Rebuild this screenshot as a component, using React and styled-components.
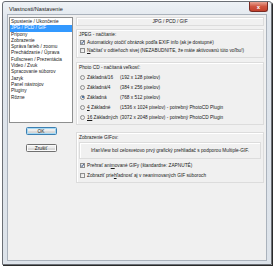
import React from "react";
import styled, { createGlobalStyle } from "styled-components";

const Global = createGlobalStyle`
  html, body { margin: 0; padding: 0; background: #fff; }
  body { font-family: "Liberation Sans", Arial, sans-serif; }
`;

const Stage = styled.div`
  width: 275px;
  height: 268px;
  padding: 1px 3px 3px 2px;
  box-sizing: border-box;
`;

const Frame = styled.div`
  height: 100%;
  box-sizing: border-box;
  border: 1px solid #6b6f75;
  border-radius: 3px 3px 0 0;
  background: linear-gradient(#eef2f6, #dfe5ec 20px, #dde3ea);
  display: flex;
  flex-direction: column;
  padding: 0 4px 3px 4px;
  box-shadow: 1px 1px 0 #2a2a2a;
`;

const TitleBar = styled.div`
  height: 12px;
  display: flex;
  align-items: center;
  justify-content: space-between;
`;

const Title = styled.span`
  font-size: 5.6px;
  color: #1a1a1a;
  padding-left: 2px;
  padding-top: 2px;
`;

const Close = styled.div`
  width: 19px;
  height: 10px;
  margin-top: -2px;
  margin-right: -1px;
  border: 1px solid #7a2a22;
  border-top: none;
  border-radius: 0 0 3px 3px;
  background: linear-gradient(#e8a595, #d0553f 50%, #c2402c);
  display: flex;
  align-items: center;
  justify-content: center;
  color: #fff;
  font-size: 6px;
  font-weight: bold;
  box-sizing: border-box;
`;

const Client = styled.div`
  flex: 1;
  background: #f0f0f0;
  border: 1px solid #aab2bc;
  display: flex;
  gap: 3px;
  padding: 2px 1px 0 1px;
  font-size: 4.75px;
  color: #1a1a1a;
`;

const LeftCol = styled.div`
  width: 64px;
  display: flex;
  flex-direction: column;
  align-items: center;
`;

const List = styled.div`
  width: 64px;
  height: 106px;
  box-sizing: border-box;
  background: #fff;
  border: 1px solid #8e8f8f;
  padding: 1px 0 0 0;
  display: flex;
  flex-direction: column;
`;

const Item = styled.div`
  height: 6.3px;
  line-height: 6.3px;
  padding-left: 1px;
  white-space: nowrap;
  background: ${(p) => (p.$sel ? "#3399ff" : "transparent")};
  color: ${(p) => (p.$sel ? "#fff" : "#1a1a1a")};
`;

const Button = styled.div`
  width: 31px;
  height: 8px;
  box-sizing: border-box;
  border: 1px solid ${(p) => (p.$def ? "#3c7fb1" : "#707070")};
  border-radius: 1.5px;
  background: linear-gradient(#f2f2f2, #ebebeb 50%, #dddddd 51%, #cfcfcf);
  box-shadow: ${(p) => (p.$def ? "inset 0 0 0 1px #a6d9f4" : "inset 0 0 0 1px #fafafa")};
  display: flex;
  align-items: center;
  justify-content: center;
  margin-top: ${(p) => p.$mt}px;
`;

const RightCol = styled.div`
  flex: 1;
  display: flex;
  flex-direction: column;
  gap: 3px;
  padding-right: 1px;
`;

const Header = styled.div`
  height: 9px;
  border: 1px solid #dcdcdc;
  box-shadow: inset 1px 1px 0 #fff;
  display: flex;
  align-items: center;
  justify-content: center;
  box-sizing: border-box;
`;

const Group = styled.div`
  border: 1px solid #dcdcdc;
  box-shadow: inset 1px 1px 0 #fff;
  padding: 2px;
  display: flex;
  flex-direction: column;
  height: ${(p) => p.$h}px;
  box-sizing: border-box;
  margin-top: ${(p) => p.$mt || 0}px;
`;

const Label = styled.div`
  height: 6px;
  line-height: 6px;
  margin-bottom: ${(p) => p.$mb}px;
`;

const Row = styled.div`
  display: flex;
  align-items: center;
  gap: 2px;
  height: ${(p) => p.$h || 10}px;
  white-space: nowrap;
  padding-left: 1px;
`;

const Box = styled.span`
  width: 5px;
  height: 5px;
  box-sizing: border-box;
  border: 1px solid #8f8f8f;
  background: linear-gradient(135deg, #dcdcdc, #fbfbfb);
  border-radius: ${(p) => (p.$round ? "50%" : "0")};
  position: relative;
  flex: none;
`;

const Dot = styled.span`
  position: absolute;
  left: 0.5px;
  top: 0.5px;
  width: 2px;
  height: 2px;
  border-radius: 50%;
  background: #1c4f8c;
`;

const Cell = styled.span`
  display: inline-block;
  width: ${(p) => p.$w}px;
`;

const Key = styled.span`
  text-decoration: underline;
`;

const Info = styled.div`
  height: 17px;
  border: 1px solid #dcdcdc;
  box-shadow: inset 1px 1px 0 #fff;
  display: flex;
  align-items: center;
  justify-content: center;
  margin: 1px 0 2px 0;
  box-sizing: border-box;
`;

const Check = () => (
  <svg width="5" height="5" viewBox="0 0 5 5" style={{ position: "absolute", left: -1, top: -1 }}>
    <path d="M1 2.5 L2 3.6 L4 1" fill="none" stroke="#2b4c83" strokeWidth="0.9" />
  </svg>
);

const items = [
  "Spustenie / Ukončenie",
  "JPG / PCD / GIF",
  "Prípony",
  "Zobrazenie",
  "Správa farieb / zoomu",
  "Prechádzanie / Úprava",
  "Fullscreen / Prezentácia",
  "Video / Zvuk",
  "Spracovanie súborov",
  "Jazyk",
  "Panel nástrojov",
  "Pluginy",
  "Rôzne",
];

const radios = [
  ["", "Základná/16", "(192 x 128 pixelov)", false],
  ["", "Základná/4", "(384 x 256 pixelov)", false],
  ["", "Základná", "(768 x 512 pixelov)", true],
  ["4", " Základné", "(1536 x 1024 pixelov) - potrebný PhotoCD Plugin", false],
  ["16", " Základných", "(3072 x 2048 pixelov) - potrebný PhotoCD Plugin", false],
];

export default function App() {
  return (
    <Stage>
      <Global />
      <Frame>
        <TitleBar>
          <Title>Vlastnosti/Nastavenie</Title>
          <Close>x</Close>
        </TitleBar>
        <Client>
          <LeftCol>
            <List>
              {items.map((t, i) => (
                <Item key={t} $sel={i === 1}>
                  {t}
                </Item>
              ))}
            </List>
            <Button $def $mt={4}>OK</Button>
            <Button $mt={9}>Zrušiť</Button>
          </LeftCol>
          <RightCol>
            <Header>JPG / PCD / GIF</Header>
            <Group $h={29}>
              <Label $mb={0}>JPEG - načítanie:</Label>
              <Row>
                <Box>
                  <Check />
                </Box>
                Automaticky otočiť obrázok podľa EXIF info (ak je dostupné)
              </Row>
              <Row>
                <Box />
                <span>
                  <Key>N</Key>ačítať v odtieňoch sivej (NEZABUDNITE, že máte aktivovanú túto voľbu!)
                </span>
              </Row>
            </Group>
            <Group $h={63} $mt={1}>
              <Label $mb={2}>Photo CD - načítaná veľkosť:</Label>
              {radios.map(([k, a, b, sel]) => (
                <Row key={a} $h={10.6}>
                  <Box $round>{sel && <Dot />}</Box>
                  <Cell $w={31}>
                    {k && <Key>{k}</Key>}
                    {a}
                  </Cell>
                  {b}
                </Row>
              ))}
            </Group>
            <Group $h={51} $mt={4}>
              <Label $mb={0}>Zobrazenie GIFov:</Label>
              <Info>IrfanView bol celosvetovo prvý grafický prehliadač s podporou Multiple-GIF.</Info>
              <Row>
                <Box>
                  <Check />
                </Box>
                <span>
                  Prehrať ani<Key>m</Key>ované GIFy (štandardne: ZAPNUTÉ)
                </span>
              </Row>
              <Row>
                <Box />
                <span>
                  Zobraziť prie<Key>h</Key>ľadnosť aj v neanimovaných GIF súboroch
                </span>
              </Row>
            </Group>
          </RightCol>
        </Client>
      </Frame>
    </Stage>
  );
}
